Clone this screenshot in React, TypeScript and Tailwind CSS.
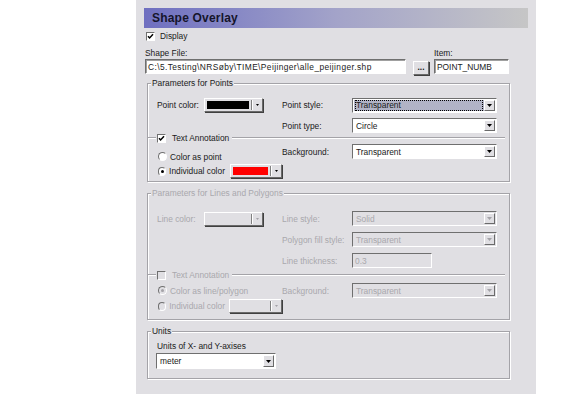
import React from 'react';

const face = 'bg-[#e0dfe3]';
const sunken = 'border border-t-[#6f6f6f] border-l-[#6f6f6f] border-b-white border-r-white';
const raised = 'border border-t-white border-l-white border-b-[#6a6a6a] border-r-[#6a6a6a]';
const dis = 'text-[#a9a8ad]';

const Arrow = ({ disabled = false }: { disabled?: boolean }) => (
  <span className={`w-[11px] h-full flex items-center justify-center ${face} ${raised}`}>
    <svg width="5" height="3" viewBox="0 0 5 3">
      <path d="M0 0h5L2.5 3z" fill={disabled ? '#a3a2a7' : '#000'} />
    </svg>
  </span>
);

const Select = ({
  value,
  className,
  disabled = false,
  focused = false,
}: {
  value: string;
  className: string;
  disabled?: boolean;
  focused?: boolean;
}) => (
  <div className={`${className} flex items-stretch p-[1px] ${sunken} ${disabled ? face : 'bg-white'}`}>
    <div className={`flex-1 flex items-center pl-[1px] pr-[1px] ${focused ? 'bg-[#b1b3c6]' : ''}`}>
      <span
        className={`flex-1 h-full flex items-center pl-[1px] ${focused ? 'outline outline-1 outline-dotted outline-black -outline-offset-1' : ''} ${disabled ? dis : 'text-[#1a1a1a]'}`}
      >
        {value}
      </span>
    </div>
    <Arrow disabled={disabled} />
  </div>
);

const ColorPick = ({ color, className }: { color?: string; className: string }) => (
  <div className={`${className} h-[14px] flex items-center ${face} ${raised} shadow-[1px_1px_0_#404040]`}>
    <div className="flex-1 h-full py-[2px] pl-[2px] pr-[2px]">
      {color ? <div className={`w-full h-full ${color}`} /> : null}
    </div>
    <div className="h-[10px] w-0 border-l border-l-[#808080] border-r border-r-white" />
    <div className="w-[9px] flex items-center justify-center">
      <svg width="3" height="2" viewBox="0 0 3 2">
        <path d="M0 0h3L1.5 2z" fill={color ? '#000' : '#a3a2a7'} />
      </svg>
    </div>
  </div>
);

const Check = ({ checked, disabled = false }: { checked: boolean; disabled?: boolean }) => (
  <span className={`w-[9px] h-[9px] flex items-center justify-center ${sunken} ${disabled ? face : 'bg-white'}`}>
    {checked ? (
      <svg width="7" height="7" viewBox="0 0 7 7">
        <path d="M1 3.2l1.6 1.7L6 1.3" stroke="#000" strokeWidth="1.5" fill="none" />
      </svg>
    ) : null}
  </span>
);

const Radio = ({ checked, disabled = false }: { checked: boolean; disabled?: boolean }) => (
  <span
    className={`w-[9px] h-[9px] rounded-full flex items-center justify-center border border-t-[#6f6f6f] border-l-[#6f6f6f] border-b-white border-r-white ${disabled ? face : 'bg-white'}`}
  >
    {checked ? <span className={`w-[3px] h-[3px] rounded-full ${disabled ? 'bg-[#a3a2a7]' : 'bg-black'}`} /> : null}
  </span>
);

const Etch = ({ className = '' }: { className?: string }) => (
  <div className={`h-0 border-t border-t-[#a4a3a8] border-b border-b-white ${className}`} />
);

const AnnotationLine = ({ checked, disabled = false }: { checked: boolean; disabled?: boolean }) => (
  <div className="flex items-center h-[10px] pr-[4px]">
    <Etch className="w-[8px]" />
    <span className="ml-[1px]">
      <Check checked={checked} disabled={disabled} />
    </span>
    <span className={`ml-[6px] mr-[3px] ${disabled ? dis : ''}`}>Text Annotation</span>
    <Etch className="flex-1" />
  </div>
);

const Group = ({ title, disabled = false, className, children }: { title: string; disabled?: boolean; className: string; children: React.ReactNode }) => (
  <div
    className={`relative ml-[3px] w-[363px] border border-[#a4a3a8] shadow-[inset_1px_1px_0_#fff,1px_1px_0_#fff] ${className}`}
  >
    <span className={`absolute -top-[6px] left-[3px] px-[1px] h-[10px] leading-[10px] ${face} ${disabled ? dis : ''}`}>{title}</span>
    {children}
  </div>
);

export default function App() {
  return (
    <div
      className="w-[566px] h-[394px] bg-white flex text-[8.4px] leading-[10px] text-[#1a1a1a]"
      style={{ fontFamily: '"Liberation Sans", Arial, sans-serif' }}
    >
      <div className="w-[136px] shrink-0" />
      <div className={`w-[400px] h-full ${face} px-[8px] pt-[8px] flex flex-col`}>
        <div className="w-[384px] h-[20px] flex items-center pl-[8px] bg-gradient-to-r from-[#6f6fc0] via-[#a3a3c9] to-[#c6c6c6]">
          <span className="text-[12px] font-bold text-[#15152b] tracking-[0.2px]">Shape Overlay</span>
        </div>

        <div className="mt-[3px] h-[10px] flex items-center ml-[2px]">
          <Check checked />
          <span className="ml-[5px]">Display</span>
        </div>

        <div className="mt-[7px] flex items-end ml-[1px]">
          <div className="flex flex-col">
            <span className="h-[10px] leading-[10px]">Shape File:</span>
            <div className={`mt-[1px] w-[261px] h-[15px] flex items-center pl-[2px] bg-white tracking-[0.4px] ${sunken} shadow-[inset_1px_1px_0_#a0a0a0]`}>
              C:\5.Testing\NRSøby\TIME\Peijinger\alle_peijinger.shp
            </div>
          </div>
          <div className={`ml-[7px] mb-[-1px] w-[16px] h-[14px] flex items-center justify-center font-bold ${face} ${raised} shadow-[1px_1px_0_#404040]`}>
            <span className="-mt-[3px]">...</span>
          </div>
          <div className="ml-[5px] flex flex-col">
            <span className="h-[10px] leading-[10px]">Item:</span>
            <div className={`mt-[1px] w-[75px] h-[15px] flex items-center pl-[2px] bg-white ${sunken} shadow-[inset_1px_1px_0_#a0a0a0]`}>
              POINT_NUMB
            </div>
          </div>
        </div>

        {/* Points */}
        <Group title="Parameters for Points" className="mt-[9px]">
          <div className="pt-[14px] pl-[9px] flex items-center h-[28px]">
            <span className="w-[47px]">Point color:</span>
            <ColorPick color="bg-black" className="w-[59px]" />
            <span className="ml-[19px] w-[70px]">Point style:</span>
            <Select value="Transparent" className="w-[145px] h-[15px]" focused />
          </div>
          <div className="mt-[6px] pl-[134px] flex items-center h-[15px]">
            <span className="w-[70px]">Point type:</span>
            <Select value="Circle" className="w-[145px] h-[15px]" />
          </div>
          <AnnotationLine checked />
          <div className="flex pl-[9px] pb-[3px]">
            <div className="w-[125px] flex flex-col">
              <div className="mt-[9px] h-[9px] flex items-center ml-[1px]">
                <Radio checked={false} />
                <span className="ml-[3px]">Color as point</span>
              </div>
              <div className="mt-[3px] h-[14px] flex items-center ml-[1px]">
                <Radio checked />
                <span className="ml-[3px] w-[70px]">Individual color</span>
                <ColorPick color="bg-[#ff0000]" className="w-[60px]" />
              </div>
            </div>
            <div className="mt-[1px] flex items-center h-[15px]">
              <span className="w-[70px]">Background:</span>
              <Select value="Transparent" className="w-[145px] h-[15px]" />
            </div>
          </div>
        </Group>

        {/* Lines and polygons */}
        <Group title="Parameters for Lines and Polygons" disabled className="mt-[11px]">
          <div className="pt-[17px] pl-[9px] flex items-center h-[32px]">
            <span className={`w-[47px] ${dis}`}>Line color:</span>
            <ColorPick className="w-[59px]" />
            <span className={`ml-[19px] w-[70px] ${dis}`}>Line style:</span>
            <Select value="Solid" className="w-[145px] h-[15px]" disabled />
          </div>
          <div className="mt-[6px] pl-[134px] flex items-center h-[15px]">
            <span className={`w-[70px] ${dis}`}>Polygon fill style:</span>
            <Select value="Transparent" className="w-[145px] h-[15px]" disabled />
          </div>
          <div className="mt-[6px] pl-[134px] flex items-center h-[15px]">
            <span className={`w-[70px] ${dis}`}>Line thickness:</span>
            <div className={`w-[80px] h-[15px] flex items-center pl-[2px] ${face} ${sunken} ${dis}`}>0.3</div>
          </div>
          <div className="mt-[2px]">
            <AnnotationLine checked={false} disabled />
          </div>
          <div className="flex pl-[9px] pb-[6px] pt-[3px]">
            <div className="w-[125px] flex flex-col">
              <div className="mt-[3px] h-[9px] flex items-center ml-[1px]">
                <Radio checked disabled />
                <span className={`ml-[3px] ${dis}`}>Color as line/polygon</span>
              </div>
              <div className="mt-[4px] h-[14px] flex items-center ml-[1px]">
                <Radio checked={false} disabled />
                <span className={`ml-[3px] w-[68px] ${dis}`}>Individual color</span>
                <ColorPick className="w-[60px]" />
              </div>
            </div>
            <div className="flex items-center h-[15px]">
              <span className={`w-[70px] ${dis}`}>Background:</span>
              <Select value="Transparent" className="w-[145px] h-[15px]" disabled />
            </div>
          </div>
        </Group>

        {/* Units */}
        <Group title="Units" className="mt-[11px]">
          <div className="pt-[9px] pl-[9px] h-[18px] flex items-center">Units of X- and Y-axises</div>
          <div className="mt-[3px] pl-[8px] pb-[9px]">
            <Select value="meter" className="w-[120px] h-[16px]" />
          </div>
        </Group>
      </div>
    </div>
  );
}
